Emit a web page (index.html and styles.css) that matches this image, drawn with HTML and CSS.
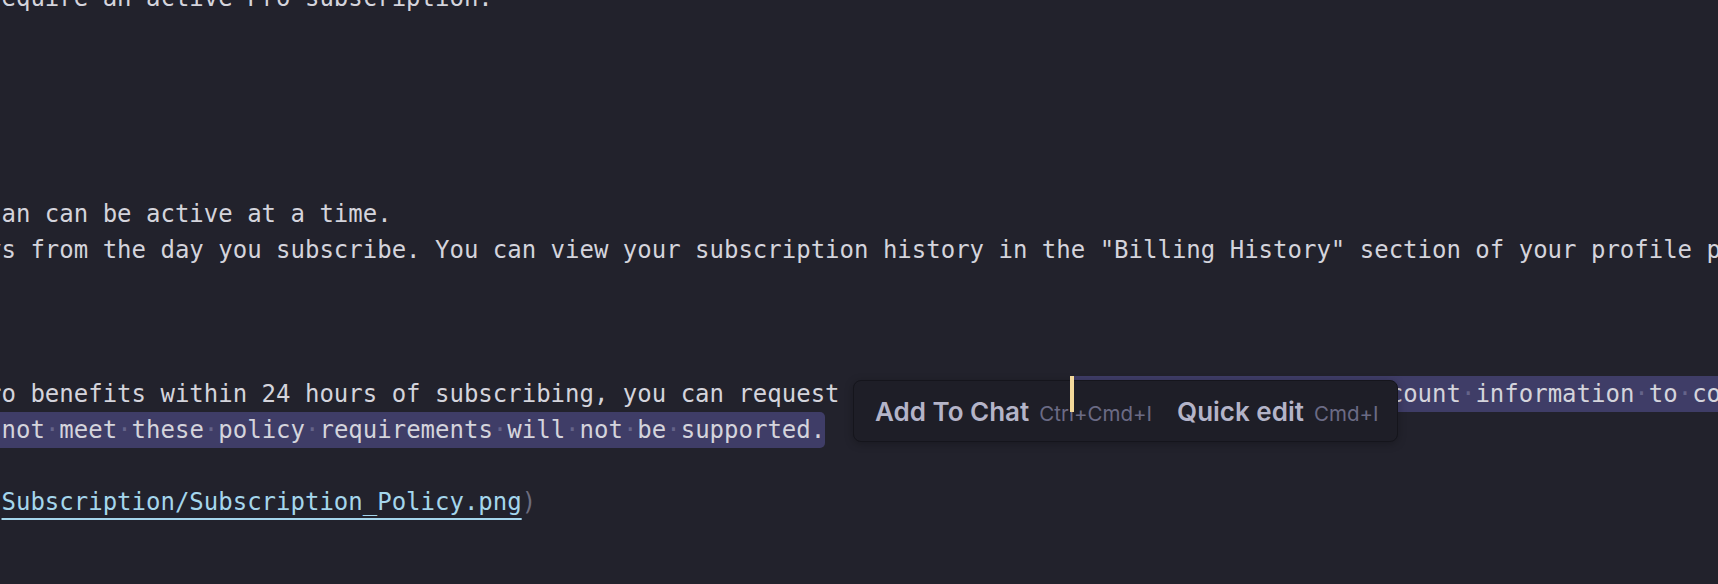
FILE: index.html
```html
<!DOCTYPE html>
<html lang="en">
<head>
<meta charset="utf-8">
<title>Editor</title>
<link rel="stylesheet" href="styles.css">
</head>
<body>
<div class="editor">
  <div class="lines">
    <div class="line">require an active Pro subscription.</div>
    <div class="line"></div>
    <div class="line"></div>
    <div class="line"></div>
    <div class="line"></div>
    <div class="line"></div>
    <div class="line">lan can be active at a time.</div>
    <div class="line">ys from the day you subscribe. You can view your subscription history in the "Billing History" section of your profile page.</div>
    <div class="line"></div>
    <div class="line"></div>
    <div class="line"></div>
    <div class="line">ro benefits within 24 hours of subscribing, you can request a refund. Pleas<span class="caret"></span><span class="sel sel-open">e<span class="ws">·</span>include<span class="ws">·</span>your<span class="ws">·</span>full<span class="ws">·</span>account<span class="ws">·</span>information<span class="ws">·</span>to<span class="ws">·</span>contact<span class="ws">·</span>support<span class="ws">·</span>for<span class="ws">·</span>help.</span></div>
    <div class="line"><span class="sel sel-end"><span class="ws">·</span>not<span class="ws">·</span>meet<span class="ws">·</span>these<span class="ws">·</span>policy<span class="ws">·</span>requirements<span class="ws">·</span>will<span class="ws">·</span>not<span class="ws">·</span>be<span class="ws">·</span>supported.</span></div>
    <div class="line"></div>
    <div class="line"><span class="path">/</span><span class="link">Subscription/Subscription_Policy.png</span><span class="punct">)</span></div>
    <div class="line"></div>
    <div class="line"></div>
  </div>
  <div class="popup">
    <div class="action">
      <span class="label">Add To Chat</span>
      <span class="kbd">Ctrl+Cmd+I</span>
    </div>
    <div class="action">
      <span class="label">Quick edit</span>
      <span class="kbd">Cmd+I</span>
    </div>
  </div>
</div>
</body>
</html>
```

FILE: styles.css
```css
html, body {
  margin: 0;
  padding: 0;
  background: #22222c;
  overflow: hidden;
}

.editor {
  position: relative;
  width: 1718px;
  height: 584px;
  overflow: hidden;
  background: #22222c;
}

.lines {
  margin-top: -20px;
  margin-left: -12.95px;
  font-family: "DejaVu Sans Mono", monospace;
  font-size: 24px;
  line-height: 36px;
  color: #d4d4dc;
}

.line {
  height: 36px;
  white-space: pre;
}

.sel {
  display: inline-block;
  vertical-align: top;
  height: 36px;
  background: #3f3d67;
}

.sel-open {
  border-radius: 4px 0 0 0;
}

.sel-end {
  border-radius: 0 5px 5px 0;
}

.ws {
  color: #65648a;
}

.caret {
  display: inline-block;
  vertical-align: top;
  position: relative;
  width: 0;
  height: 36px;
}

.caret::after {
  content: "";
  position: absolute;
  left: -1px;
  top: 0;
  width: 4px;
  height: 36px;
  background: #f3d99a;
  z-index: 5;
}

.path {
  color: #a5d6ec;
}

.link {
  color: #a5d6ec;
  text-decoration: underline;
  text-decoration-thickness: 2px;
  text-underline-offset: 8px;
}

.punct {
  color: #6c6c7e;
}

.popup {
  position: absolute;
  left: 853px;
  top: 380px;
  width: 545px;
  height: 62px;
  box-sizing: border-box;
  background: #1e1e27;
  border: 1px solid #15151c;
  border-radius: 8px;
  box-shadow: 0 2px 8px rgba(0, 0, 0, 0.25);
  display: flex;
  align-items: center;
  gap: 25px;
  padding: 0 21px;
  z-index: 3;
  white-space: nowrap;
}

.action {
  flex: none;
  display: flex;
  align-items: baseline;
  gap: 10px;
}

.label {
  font-family: Inter, "Noto Sans", sans-serif;
  font-weight: 600;
  font-size: 26px;
  color: #b4b4c8;
}

.kbd {
  font-family: Inter, "Noto Sans", sans-serif;
  font-weight: 400;
  font-size: 20.5px;
  color: #6b6b85;
}
```
